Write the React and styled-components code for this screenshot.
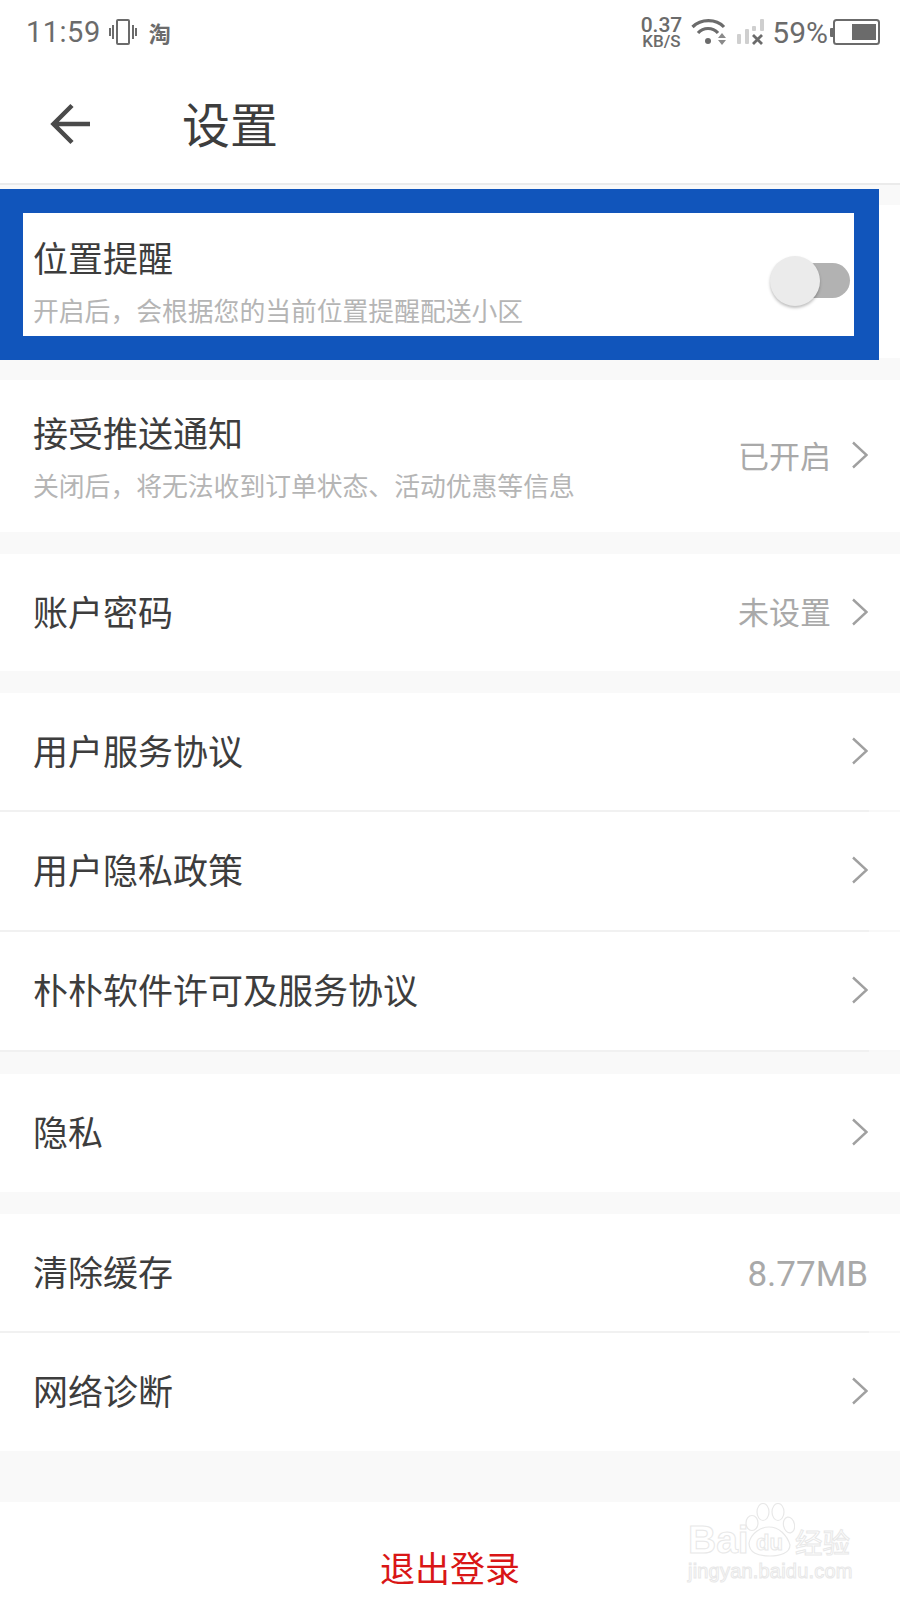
import React from 'react';
import styled, { createGlobalStyle } from 'styled-components';

const GlobalStyle = createGlobalStyle`
  html, body {
    margin: 0;
    padding: 0;
    background: #fff;
  }
  body {
    font-family: "Noto Sans CJK SC", "Noto Sans", sans-serif;
  }
`;

const Page = styled.div`
  position: relative;
  width: 900px;
  height: 1600px;
  overflow: hidden;
  background: #f9f9f9;
`;

const StatusBar = styled.div`
  display: flex;
  align-items: center;
  justify-content: space-between;
  height: 64px;
  padding: 0 20px 0 26px;
  background: #fff;
  color: #6b6b6b;
`;

const StatusGroup = styled.div`
  display: flex;
  align-items: center;
  gap: ${(p) => p.$gap || 0}px;
`;

const Clock = styled.span`
  font-family: Roboto, sans-serif;
  font-size: 29px;
  letter-spacing: 0.5px;
`;

const AppBadge = styled.span`
  margin-left: 4px;
  font-size: 22px;
  font-weight: 700;
`;

const Speed = styled.div`
  display: flex;
  flex-direction: column;
  align-items: center;
  font-family: Roboto, sans-serif;
  font-weight: 500;
`;

const SpeedValue = styled.span`
  font-size: 21px;
  line-height: 18px;
`;

const SpeedUnit = styled.span`
  font-size: 17px;
  line-height: 15px;
`;

const Percent = styled.span`
  margin: 0 -7px 0 -1px;
  font-family: Roboto, sans-serif;
  font-size: 30px;
`;

const Header = styled.div`
  display: flex;
  align-items: center;
  height: 119px;
  padding-left: 50px;
  background: #fff;
  border-bottom: 2px solid #ebebeb;
`;

const BackButton = styled.div`
  display: flex;
  width: 132px;
`;

const Title = styled.h1`
  margin: 0 0 4px;
  font-size: 48px;
  font-weight: 400;
  color: #3d3d3d;
`;

const Section = styled.section`
  margin-top: ${(p) => p.$top || 22}px;
  background: #fff;
`;

const Row = styled.div`
  display: flex;
  align-items: center;
  justify-content: space-between;
  height: ${(p) => p.$height || 117}px;
  padding: 0 32px 2px 33px;
  box-sizing: border-box;
  border-bottom: ${(p) => (p.$divider ? '2px solid #f1f1f1' : 'none')};
  border-image: ${(p) => (p.$divider ? 'linear-gradient(to right, #f1f1f1 868px, #f8f8f8 868px) 1' : 'none')};
`;

const RowText = styled.div`
  display: flex;
  flex-direction: column;
`;

const RowTitle = styled.div`
  padding-bottom: 2px;
  font-size: 35px;
  line-height: 46px;
  color: #3d3d3d;
`;

const RowHint = styled.div`
  margin-top: 11px;
  font-size: 25.8px;
  line-height: 34px;
  color: #b5b5b5;
`;

const RowRight = styled.div`
  display: flex;
  align-items: center;
  gap: 19px;
`;

const RowValue = styled.span`
  padding-bottom: 2px;
  font-size: 31px;
  color: #a9a9a9;
`;

const SizeValue = styled.span`
  padding-top: 6px;
  font-family: Roboto, sans-serif;
  font-size: 35px;
  color: #a9a9a9;
`;

const SwitchTrack = styled.div`
  position: relative;
  width: 62px;
  height: 35px;
  margin-right: 18px;
  border-radius: 18px;
  background: #b2b2b2;
`;

const SwitchKnob = styled.div`
  position: absolute;
  left: -18px;
  top: -7px;
  width: 50px;
  height: 50px;
  border-radius: 50%;
  background: #ebebeb;
  box-shadow: 0 2px 3px rgba(0, 0, 0, 0.25);
`;

const HighlightFrame = styled.div`
  position: absolute;
  left: 0;
  top: 189px;
  width: 879px;
  height: 171px;
  box-sizing: border-box;
  border: solid #1155bb;
  border-width: 24px 25px 24px 23px;
`;

const LogoutBar = styled.div`
  margin-top: 51px;
  height: 98px;
  display: flex;
  align-items: flex-end;
  justify-content: center;
  padding-bottom: 10px;
  box-sizing: border-box;
  background: #fff;
  font-size: 35px;
  line-height: 46px;
  color: #d91616;
`;

const Watermark = styled.div`
  position: absolute;
  left: 688px;
  top: 1500px;
  width: 170px;
  color: #fff;
  -webkit-text-stroke: 1px #e8e8e8;
  font-family: "Liberation Sans", sans-serif;
`;

const WatermarkTop = styled.div`
  display: flex;
  align-items: flex-end;
  height: 62px;
`;

const WatermarkBaidu = styled.span`
  width: 107px;
  font-size: 39px;
  font-weight: 700;
  line-height: 44px;
`;

const WatermarkDu = styled.span`
  position: absolute;
  left: 68px;
  top: 31px;
  font-size: 22px;
  font-weight: 700;
  line-height: 24px;
`;

const WatermarkCn = styled.span`
  font-family: "Noto Sans CJK SC", sans-serif;
  font-size: 27.5px;
  line-height: 42px;
  white-space: nowrap;
`;

const WatermarkPaw = styled.svg`
  position: absolute;
  left: 57px;
  top: 3px;
`;

const WatermarkUrl = styled.div`
  margin-top: -2px;
  font-size: 20px;
  letter-spacing: 0.2px;
  white-space: nowrap;
`;

function Chevron() {
  return (
    <svg width="18" height="28" viewBox="0 0 18 28" fill="none" stroke="#a0a0a0" strokeWidth="2.4">
      <path d="M3 1.5 L16.5 14 L3 26.5" />
    </svg>
  );
}

function VibrateIcon() {
  return (
    <svg width="28" height="26" viewBox="0 0 28 26" fill="none" stroke="#6b6b6b" strokeWidth="2">
      <rect x="8" y="1" width="12" height="24" rx="1" />
      <path d="M4 6 V20 M1 9 V17 M24 6 V20 M27 9 V17" />
    </svg>
  );
}

function WifiIcon() {
  return (
    <svg width="36" height="28" viewBox="0 0 36 28" fill="none">
      <path d="M1.5 9 C10 0.5 25 0.5 33 9" stroke="#6b6b6b" strokeWidth="3.2" />
      <path d="M7 15 C12.5 9 21.5 9 27 15" stroke="#6b6b6b" strokeWidth="3.2" />
      <circle cx="17" cy="23" r="3" fill="#6b6b6b" />
      <path d="M31 15 L35 20 H27 Z M27 22 H35 L31 27 Z" fill="#8a8a8a" />
    </svg>
  );
}

function SignalIcon() {
  return (
    <svg width="28" height="26" viewBox="0 0 28 26" fill="none">
      <rect x="1" y="15" width="4" height="10" rx="1" fill="#cfcfcf" />
      <rect x="9" y="10" width="4" height="15" rx="1" fill="#cfcfcf" />
      <rect x="16" y="7" width="4" height="5" rx="1" fill="#cfcfcf" />
      <rect x="24" y="0" width="4" height="12" rx="1" fill="#cfcfcf" />
      <path d="M17 16 L26 25 M26 16 L17 25" stroke="#6b6b6b" strokeWidth="2.8" />
    </svg>
  );
}

function BatteryIcon() {
  return (
    <svg width="50" height="26" viewBox="0 0 50 26" fill="none">
      <rect x="0" y="9" width="4" height="9" rx="1" fill="#6b6b6b" />
      <rect x="4" y="1" width="45" height="24" rx="2.5" stroke="#6b6b6b" strokeWidth="2" />
      <rect x="22" y="5" width="24" height="16" fill="#6b6b6b" />
    </svg>
  );
}

function BackArrow() {
  return (
    <svg width="42" height="42" viewBox="0 0 42 42" fill="none" stroke="#4a4a4a" strokeWidth="4.5">
      <path d="M40 21 H4 M22 2.5 L3.5 21 L22 39.5" />
    </svg>
  );
}

function WatermarkPawIcon() {
  return (
    <WatermarkPaw width="50" height="54" viewBox="0 0 50 54" fill="#fff" stroke="#e8e8e8" strokeWidth="1.2">
      <ellipse cx="7" cy="20" rx="6" ry="7.5" />
      <ellipse cx="18" cy="9" rx="6" ry="8.5" />
      <ellipse cx="33" cy="9" rx="6" ry="8.5" />
      <ellipse cx="44" cy="22" rx="5.5" ry="8" transform="rotate(-12 44 22)" />
      <path d="M4 40 C6 30 16 24 24 24 C34 24 42 32 45 42 C45 50 35 53 25 53 C13 53 4 50 4 40 Z" />
    </WatermarkPaw>
  );
}

function SettingRow({ title, hint, value, arrow = true, height, divider }) {
  return (
    <Row $height={height} $divider={divider}>
      <RowText>
        <RowTitle>{title}</RowTitle>
        {hint && <RowHint>{hint}</RowHint>}
      </RowText>
      <RowRight>
        {value && <RowValue>{value}</RowValue>}
        {arrow && <Chevron />}
      </RowRight>
    </Row>
  );
}

export default function App() {
  return (
    <Page>
      <GlobalStyle />
      <StatusBar>
        <StatusGroup $gap={8}>
          <Clock>11:59</Clock>
          <VibrateIcon />
          <AppBadge>淘</AppBadge>
        </StatusGroup>
        <StatusGroup $gap={9}>
          <Speed>
            <SpeedValue>0.37</SpeedValue>
            <SpeedUnit>KB/S</SpeedUnit>
          </Speed>
          <WifiIcon />
          <SignalIcon />
          <Percent>59%</Percent>
          <BatteryIcon />
        </StatusGroup>
      </StatusBar>
      <Header>
        <BackButton>
          <BackArrow />
        </BackButton>
        <Title>设置</Title>
      </Header>

      <Section $top={20}>
        <Row $height={153}>
          <RowText>
            <RowTitle>位置提醒</RowTitle>
            <RowHint>开启后，会根据您的当前位置提醒配送小区</RowHint>
          </RowText>
          <SwitchTrack>
            <SwitchKnob />
          </SwitchTrack>
        </Row>
      </Section>

      <Section>
        <SettingRow
          title="接受推送通知"
          hint="关闭后，将无法收到订单状态、活动优惠等信息"
          value="已开启"
          height={152}
        />
      </Section>

      <Section>
        <SettingRow title="账户密码" value="未设置" />
      </Section>

      <Section>
        <SettingRow title="用户服务协议" height={119} divider />
        <SettingRow title="用户隐私政策" height={120} divider />
        <SettingRow title="朴朴软件许可及服务协议" height={120} divider />
      </Section>

      <Section>
        <SettingRow title="隐私" height={118} />
      </Section>

      <Section>
        <Row $height={119} $divider>
          <RowTitle>清除缓存</RowTitle>
          <SizeValue>8.77MB</SizeValue>
        </Row>
        <SettingRow title="网络诊断" height={118} />
      </Section>

      <LogoutBar>退出登录</LogoutBar>

      <HighlightFrame />
      <Watermark>
        <WatermarkPawIcon />
        <WatermarkDu>du</WatermarkDu>
        <WatermarkTop>
          <WatermarkBaidu>Bai</WatermarkBaidu>
          <WatermarkCn>经验</WatermarkCn>
        </WatermarkTop>
        <WatermarkUrl>jingyan.baidu.com</WatermarkUrl>
      </Watermark>
    </Page>
  );
}
